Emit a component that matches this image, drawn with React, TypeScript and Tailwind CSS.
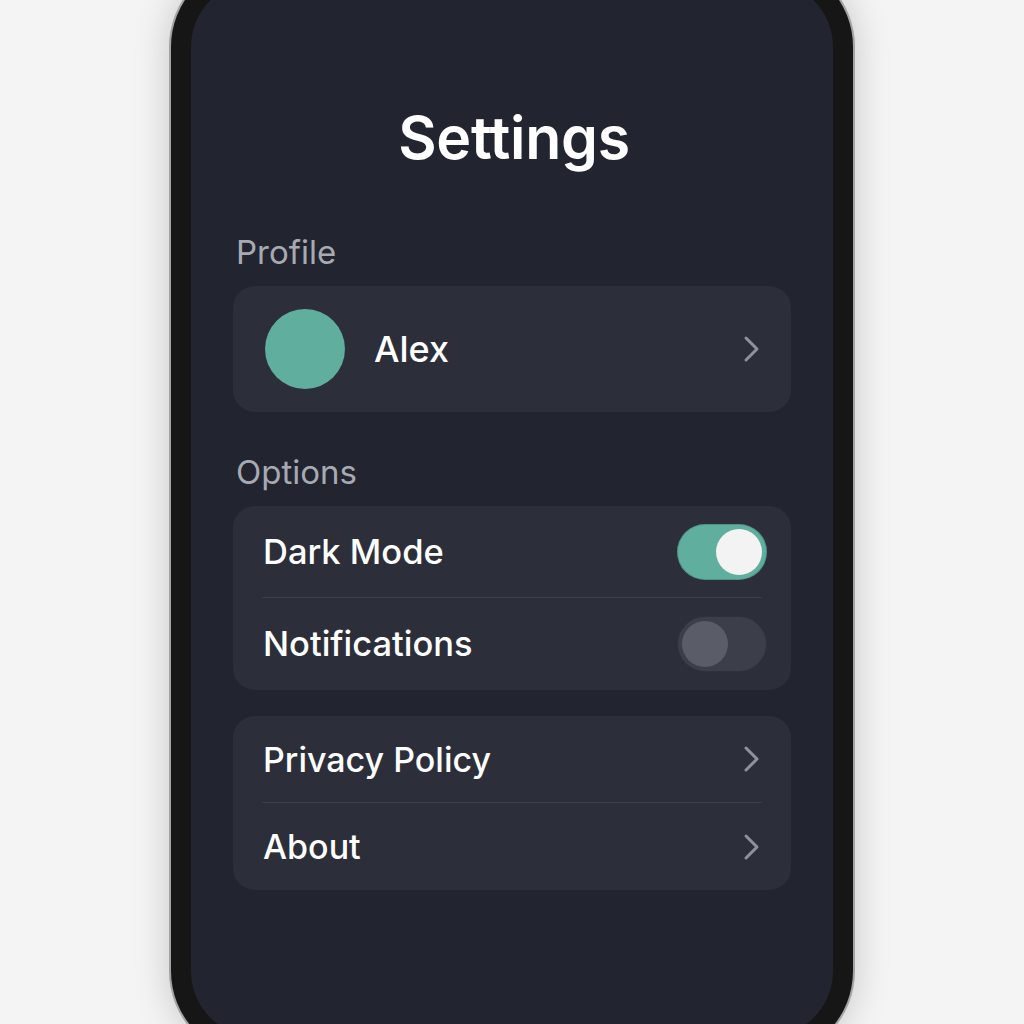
import React, { useState } from "react";

const Chevron = () => (
  <svg width="18" height="28" viewBox="0 0 18 28" fill="none" className="shrink-0">
    <path
      d="M3 3 L14 14 L3 25"
      stroke="#8f929a"
      strokeWidth="3"
      strokeLinecap="round"
      strokeLinejoin="round"
    />
  </svg>
);

const Toggle = ({ on, onClick }: { on: boolean; onClick: () => void }) => (
  <button
    onClick={onClick}
    className={
      on
        ? "w-[90px] h-[56px] rounded-full bg-[#5fae9e] p-[5px] flex justify-end items-center shadow-[inset_0_0_0_1px_rgba(0,0,0,0.15)]"
        : "w-[90px] h-[56px] rounded-full bg-[#3c3f49] p-[5px] flex justify-start items-center shadow-[inset_0_0_0_1px_rgba(0,0,0,0.2)]"
    }
  >
    <span
      className={
        on
          ? "w-[46px] h-[46px] rounded-full bg-[#f3f3f3]"
          : "w-[46px] h-[46px] rounded-full bg-[#5a5d67]"
      }
    />
  </button>
);

const Divider = () => <div className="h-px mx-[29px] bg-[#3d404b]" />;

const App = () => {
  const [darkMode, setDarkMode] = useState(true);
  const [notifications, setNotifications] = useState(false);

  return (
    <div
      className="h-[1024px] overflow-hidden bg-[#f4f4f4] flex justify-center"
      style={{ fontFamily: "Inter, 'Noto Sans', sans-serif" }}
    >
      {/* phone frame */}
      <div className="mt-[-41px] w-[686px] h-[1100px] shrink-0 rounded-[88px] bg-[#161616] border-2 border-[#a3a3a3] p-[20px] shadow-[0_0_36px_rgba(0,0,0,0.18)]">
        <div className="h-full rounded-[66px] bg-[#22252f] px-[42px] pt-[123px] flex flex-col">
          <h1 className="text-center text-white text-[59px] leading-[68px] font-semibold tracking-[-0.3px] pl-[4px]">
            Settings
          </h1>

          <div className="mt-[60px] text-[33px] leading-[40px] text-[#a7aab2] pl-[3px]">
            Profile
          </div>
          <div className="mt-[14px] h-[126px] rounded-[22px] bg-[#2c2f3a] flex items-center pl-[32px] pr-[30px]">
            <div className="w-[80px] h-[80px] rounded-full bg-[#5fae9e]" />
            <span className="ml-[29px] text-white text-[36px] font-medium flex-1">Alex</span>
            <Chevron />
          </div>

          <div className="mt-[40px] text-[33px] leading-[40px] text-[#a7aab2] pl-[3px]">
            Options
          </div>
          <div className="mt-[14px] rounded-[22px] bg-[#2c2f3a] flex flex-col">
            <div className="h-[91px] flex items-center justify-between pl-[30px] pr-[24px]">
              <span className="text-white text-[34.5px] font-medium">Dark Mode</span>
              <Toggle on={darkMode} onClick={() => setDarkMode(!darkMode)} />
            </div>
            <Divider />
            <div className="h-[92px] flex items-center justify-between pl-[30px] pr-[24px]">
              <span className="text-white text-[34.5px] font-medium">Notifications</span>
              <Toggle on={notifications} onClick={() => setNotifications(!notifications)} />
            </div>
          </div>

          <div className="mt-[26px] rounded-[22px] bg-[#2c2f3a] flex flex-col">
            <div className="h-[86px] flex items-center justify-between pl-[30px] pr-[30px]">
              <span className="text-white text-[34px] font-medium">Privacy Policy</span>
              <Chevron />
            </div>
            <Divider />
            <div className="h-[87px] flex items-center justify-between pl-[30px] pr-[30px]">
              <span className="text-white text-[34px] font-medium">About</span>
              <Chevron />
            </div>
          </div>
        </div>
      </div>
    </div>
  );
};

export default App;
